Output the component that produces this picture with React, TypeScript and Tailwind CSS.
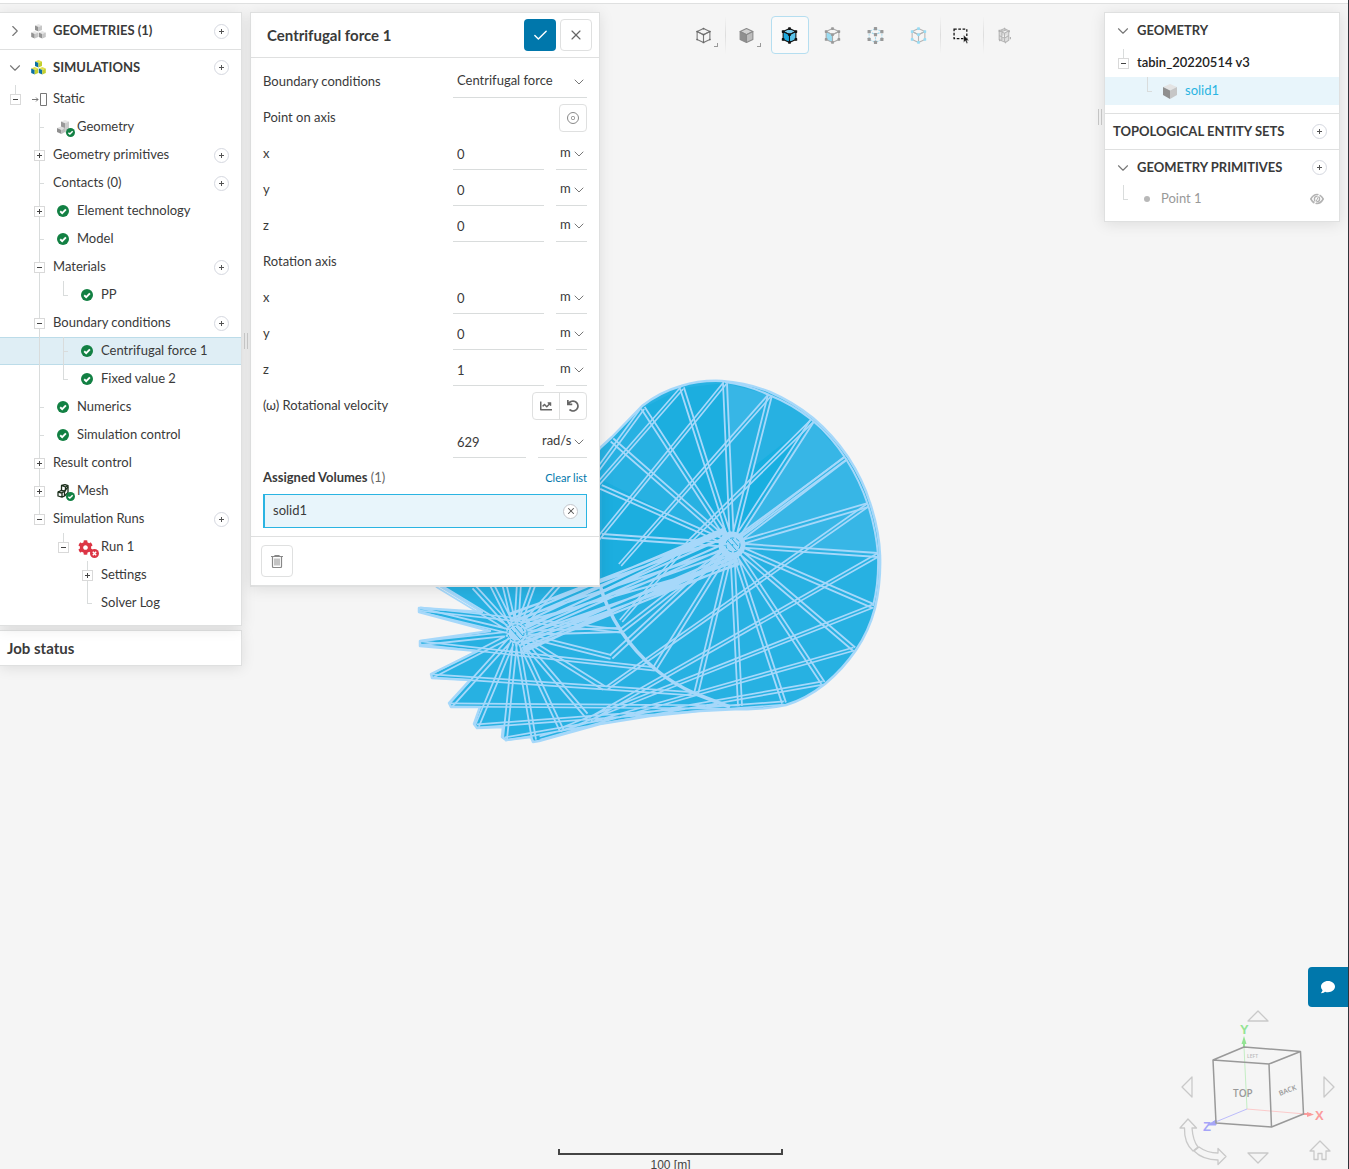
import type { ReactNode } from 'react'
import { Check, ChevronDown, ChevronRight, X } from 'lucide-react'
import { FaChartLine, FaCog, FaComment, FaUndo } from 'react-icons/fa'

type Guide = 'none' | 'line' | 'tick' | 'end' | 'plus' | 'minus' | 'minusEnd'

type TreeItem = {
  label: string
  guides: Guide[]
  icon?: ReactNode
  add?: boolean
  selected?: boolean
}

/* ---------- small icons ---------- */

const OkIcon = ({ className = 'size-3' }: { className?: string }) => (
  <svg viewBox="0 0 12 12" className={className}>
    <circle cx="6" cy="6" r="6" fill="#128043" />
    <path d="M3.2 6.2 5.2 8.1 8.9 4.3" fill="none" stroke="#fff" strokeWidth="1.9" />
  </svg>
)

const cubeAt = (x: number, y: number, c: string[]) => (
  <g key={`${x}-${y}`} transform={`translate(${x} ${y})`}>
    <path d="M0 1.5 3.5 0 7 1.5 3.5 3z" fill={c[0]} />
    <path d="M0 1.5 3.5 3V7.6L0 6z" fill={c[1]} />
    <path d="M7 1.5 3.5 3V7.6L7 6z" fill={c[2]} />
  </g>
)

const GRAY = ['#e6e6e6', '#929292', '#c6c6c6']
const LIME = ['#e3e04a', '#0b6fa4', '#c3cf2e']

const CubeStack = ({ colors }: { colors: string[] }) => (
  <svg viewBox="0 0 15 15" className="size-[15px]">
    {cubeAt(4, 0, colors)}
    {cubeAt(0.2, 7, colors)}
    {cubeAt(7.8, 7, colors)}
  </svg>
)

const StaticIcon = () => (
  <svg viewBox="0 0 17 13" className="h-[13px] w-[17px]" fill="none" stroke="#777">
    <path d="M1 6.5h6M5 4.5l2 2-2 2" />
    <path d="M9.5.5h6v12h-6z" />
  </svg>
)

const GeometryIcon = () => (
  <span className="relative flex">
    <svg viewBox="0 0 13 14" className="h-[14px] w-[13px]">
      <path d="M4 1.5 8 0l4 1.5L8 3.2z" fill="#e8e8e8" />
      <path d="M4 1.5 8 3.2V9L4 7.4z" fill="#999" />
      <path d="M12 1.5v8L8 13V3.2z" fill="#cbcbcb" />
      <path d="M0 8l4-1.5L8 8 4.5 10z" fill="#dedede" />
      <path d="M0 8l4.5 2v4L0 12z" fill="#8f8f8f" />
      <path d="M4.5 10 8 8v4l-3.500 2z" fill="#bdbdbd" />
    </svg>
    <OkIcon className="absolute top-2 left-[9px] size-[9px]" />
  </span>
)

const MeshIcon = () => (
  <span className="relative flex">
    <svg viewBox="0 0 13 14" className="h-[14px] w-[13px]" fill="none" stroke="#1c2f1c" strokeLinejoin="round">
      <path d="M4.500 1.500 8 .600l3 .900L8.500 3zM4.500 1.500V6M8.500 3v4.500M11 1.500V8.500L7.500 12" strokeWidth="1.300" />
      <path d="M1 8l3-1.500L7.500 7 5 9zM1 8v4l4 1.200V9M5 13.200 7.500 12V7L11 3" strokeWidth="1.300" />
    </svg>
    <OkIcon className="absolute top-2 left-[9px] size-[9px]" />
  </span>
)

const RunIcon = () => (
  <span className="relative flex">
    <FaCog className="size-[15px] text-[#dc3545]" />
    <svg viewBox="0 0 9 9" className="absolute top-[9px] left-3 size-[9px]">
      <circle cx="4.5" cy="4.5" r="4.5" fill="#dc3545" />
      <path d="M2.8 2.8l3.4 3.4M6.2 2.8 2.8 6.2" stroke="#fff" strokeWidth="1.4" />
    </svg>
  </span>
)

const SolidIcon = () => (
  <svg viewBox="0 0 16 16" className="size-4">
    <path d="M1 4 8 1l7 3-7 3.500z" fill="#e4e4e4" />
    <path d="M1 4l7 3.500V16l-7-4z" fill="#8f8f8f" />
    <path d="M15 4 8 7.500V16l7-4z" fill="#c6c6c6" />
  </svg>
)

const EyeOffIcon = () => (
  <svg viewBox="0 0 14 12" className="h-3 w-[14px]" fill="none" stroke="#b3b3b3">
    <path d="M.8 6C2.5 3 4.5 1.500 7 1.500S11.500 3 13.200 6C11.500 9 9.500 10.500 7 10.500S2.500 9 .8 6z" strokeWidth="1.6" />
    <circle cx="7" cy="6" r="2.6" strokeWidth="1.4" />
    <path d="M9.5 1 4.5 11" stroke="#fff" strokeWidth="1.2" />
    <path d="M8.5 3.500 6 8.500" />
  </svg>
)

const TrashIcon = () => (
  <svg viewBox="0 0 14 14" className="size-[14px]" fill="none" stroke="#888">
    <path d="M1 2.500h12M5 2.500v-1h4v1M2.500 2.500v10q0 1 1 1h7q1 0 1-1v-10" strokeWidth="1.2" />
    <path d="M5 4.500v7M7 4.500v7M9 4.500v7" />
  </svg>
)

/* ---------- tree ---------- */

const Expander = ({ open }: { open: boolean }) => (
  <button
    aria-label={open ? 'Collapse' : 'Expand'}
    className="absolute top-[9px] left-1.5 flex size-[11px] items-center justify-center border border-[#d9d9d9] bg-white"
  >
    <svg viewBox="0 0 5 5" className="size-[5px]" stroke="#444">
      <path d={open ? 'M0 2.5h5' : 'M0 2.5h5M2.5 0v5'} />
    </svg>
  </button>
)

const GuideCell = ({ kind }: { kind: Guide }) => {
  const toggle = kind === 'plus' || kind === 'minus' || kind === 'minusEnd'
  const through = kind === 'line' || kind === 'tick' || kind === 'plus' || kind === 'minus'
  return (
    <span className="relative grid w-6 shrink-0 grid-cols-[11px_5px] grid-rows-[15px_13px]">
      {kind !== 'none' && (
        <span className={`col-start-2 row-start-1 border-l border-[#d9dcdc] ${kind === 'tick' || kind === 'end' ? 'border-b' : ''}`} />
      )}
      {through && <span className="col-start-2 row-start-2 border-l border-[#d9dcdc]" />}
      {toggle && <Expander open={kind !== 'plus'} />}
    </span>
  )
}

const AddButton = ({ label }: { label: string }) => (
  <button aria-label={label} className="ml-auto flex size-[15px] shrink-0 items-center justify-center rounded-full border border-[#d5d8e0] bg-white">
    <svg viewBox="0 0 5 5" className="size-[5px]" stroke="#555">
      <path d="M0 2.5h5M2.5 0v5" />
    </svg>
  </button>
)

const TreeRow = ({ item }: { item: TreeItem }) => (
  <li className={`flex h-7 pr-3 pl-1 ${item.selected ? 'bg-[#dfeef5] shadow-[inset_0_1px_#bcdce9,inset_0_-1px_#bcdce9]' : ''}`}>
    {item.guides.map((g, i) => (
      <GuideCell key={i} kind={g} />
    ))}
    {item.icon && <span className="flex w-6 shrink-0 items-center pl-[5px]">{item.icon}</span>}
    <span className="pl-px text-[13px] leading-[26px] whitespace-nowrap">{item.label}</span>
    {item.add && (
      <span className="ml-auto flex items-center">
        <AddButton label={`Add to ${item.label}`} />
      </span>
    )}
  </li>
)

const tree: TreeItem[] = [
  { label: 'Geometry', guides: ['none', 'tick'], icon: <GeometryIcon /> },
  { label: 'Geometry primitives', guides: ['none', 'plus'], add: true },
  { label: 'Contacts (0)', guides: ['none', 'tick'], add: true },
  { label: 'Element technology', guides: ['none', 'plus'], icon: <OkIcon /> },
  { label: 'Model', guides: ['none', 'tick'], icon: <OkIcon /> },
  { label: 'Materials', guides: ['none', 'minus'], add: true },
  { label: 'PP', guides: ['none', 'line', 'end'], icon: <OkIcon /> },
  { label: 'Boundary conditions', guides: ['none', 'minus'], add: true },
  { label: 'Centrifugal force 1', guides: ['none', 'line', 'tick'], icon: <OkIcon />, selected: true },
  { label: 'Fixed value 2', guides: ['none', 'line', 'end'], icon: <OkIcon /> },
  { label: 'Numerics', guides: ['none', 'tick'], icon: <OkIcon /> },
  { label: 'Simulation control', guides: ['none', 'tick'], icon: <OkIcon /> },
  { label: 'Result control', guides: ['none', 'plus'] },
  { label: 'Mesh', guides: ['none', 'plus'], icon: <MeshIcon /> },
  { label: 'Simulation Runs', guides: ['none', 'minusEnd'], add: true },
]

const Grip = ({ className }: { className: string }) => (
  <span className={`absolute h-4 w-1 border-x border-[#c4c4c4] ${className}`} />
)

const SimulationTree = () => (
  <aside className="w-[242px] shrink-0">
    <div className="relative border border-l-0 border-[#dfe0e0] bg-white pb-2 shadow-[0_2px_14px_rgba(0,0,0,0.1)]">
      <div className="flex h-[37px] items-center border-b border-[#dfe0e0] pr-3 pl-1">
        <button aria-label="Expand geometries" className="flex w-6 pl-0.5">
          <ChevronRight size={18} strokeWidth={1.5} color="#777" />
        </button>
        <span className="flex w-6 pl-[3px]"><CubeStack colors={GRAY} /></span>
        <h2 className="pb-0.5 pl-px text-[13px] leading-5 font-bold">GEOMETRIES (1)</h2>
        <AddButton label="Add geometry" />
      </div>
      <div className="flex h-[35px] items-center pr-3 pl-1">
        <button aria-label="Collapse simulations" className="flex w-6 pl-0.5">
          <ChevronDown size={18} strokeWidth={1.5} color="#777" />
        </button>
        <span className="flex w-6 pl-[3px]"><CubeStack colors={LIME} /></span>
        <h2 className="pb-0.5 pl-px text-[13px] leading-5 font-bold">SIMULATIONS</h2>
        <AddButton label="Add simulation" />
      </div>
      <ul>
        <li className="flex h-7 pr-3 pl-1">
          <GuideCell kind="minusEnd" />
          <span className="flex w-6 items-center pl-[3px]"><StaticIcon /></span>
          <span className="pl-px text-[13px] leading-[26px]">Static</span>
        </li>
        {tree.map((item) => (
          <TreeRow key={item.label} item={item} />
        ))}
        <li className="flex h-7 pr-3 pl-1">
          <GuideCell kind="none" />
          <GuideCell kind="none" />
          <GuideCell kind="minusEnd" />
          <span className="flex w-6 items-center pl-0.5"><RunIcon /></span>
          <span className="pl-px text-[13px] leading-[26px]">Run 1</span>
        </li>
        <TreeRow item={{ label: 'Settings', guides: ['none', 'none', 'none', 'plus'] }} />
        <TreeRow item={{ label: 'Solver Log', guides: ['none', 'none', 'none', 'end'] }} />
      </ul>
      <Grip className="top-80 -right-[7px]" />
    </div>
    <div className="mt-1 border border-l-0 border-[#dfe0e0] bg-white px-[7px] py-[7px] shadow-[0_2px_14px_rgba(0,0,0,0.1)]">
      <h2 className="text-[15px] leading-5 font-bold">Job status</h2>
    </div>
  </aside>
)

/* ---------- boundary condition form ---------- */

type SelectProps = { id?: string; label: string; value: string; className: string }

const Select = ({ id, label, value, className }: SelectProps) => (
  <span className={`relative flex h-[34px] border-b border-[#d9dcdc] ${className}`}>
    <select id={id} aria-label={label} className="w-full appearance-none bg-transparent pl-1 text-[13px] outline-none">
      <option>{value}</option>
    </select>
    <ChevronDown size={16} strokeWidth={1.5} color="#777" className="pointer-events-none absolute top-[10px] right-0" />
  </span>
)

const AxisRow = ({ group, axis, value }: { group: string; axis: string; value: string }) => (
  <div className="flex h-9 items-start">
    <label htmlFor={`${group}-${axis}`} className="w-[190px] text-[13px] leading-[34px]">{axis}</label>
    <input
      id={`${group}-${axis}`}
      defaultValue={value}
      className="mr-3 h-[34px] w-0 flex-1 border-b border-[#d9dcdc] pt-0.5 pl-1 text-[13px] outline-none"
    />
    <Select label={`${group} ${axis} unit`} value="m" className="w-[31px]" />
  </div>
)

const ForceForm = () => (
  <section className="w-[350px] shrink-0 self-start border border-b-2 border-[#dfe0e0] bg-white shadow-[0_2px_14px_rgba(0,0,0,0.1)]">
    <header className="flex h-[45px] items-center gap-1 border-b border-[#dfe0e0] pr-[7px] pl-4">
      <h1 className="mr-auto text-[15px] leading-6 font-bold">Centrifugal force 1</h1>
      <button aria-label="Apply" className="flex size-8 items-center justify-center rounded bg-[#0077ab]">
        <Check size={17} strokeWidth={2} color="#fff" />
      </button>
      <button aria-label="Close" className="flex size-8 items-center justify-center rounded border border-[#dfe0e0]">
        <X size={16} strokeWidth={1.75} color="#666" />
      </button>
    </header>
    <form className="px-3 pt-1.5 pb-2">
      <div className="flex h-9 items-start">
        <label htmlFor="bc-type" className="w-[190px] text-[13px] leading-[34px]">Boundary conditions</label>
        <Select id="bc-type" label="Boundary conditions" value="Centrifugal force" className="flex-1" />
      </div>
      <div className="flex h-9 items-start justify-between">
        <span className="text-[13px] leading-[34px]">Point on axis</span>
        <button type="button" aria-label="Pick point" className="mt-1 flex size-7 items-center justify-center rounded border border-[#dfe0e0]">
          <svg viewBox="0 0 12 12" className="size-3" fill="none" stroke="#888">
            <circle cx="6" cy="6" r="5.5" />
            <rect x="4.5" y="4.5" width="3" height="3" rx="1" />
          </svg>
        </button>
      </div>
      <AxisRow group="point" axis="x" value="0" />
      <AxisRow group="point" axis="y" value="0" />
      <AxisRow group="point" axis="z" value="0" />
      <p className="h-9 text-[13px] leading-[34px]">Rotation axis</p>
      <AxisRow group="rotation" axis="x" value="0" />
      <AxisRow group="rotation" axis="y" value="0" />
      <AxisRow group="rotation" axis="z" value="1" />
      <div className="flex h-9 items-start">
        <label htmlFor="velocity" className="mr-auto text-[13px] leading-[34px]">(ω) Rotational velocity</label>
        <div className="mt-1 flex h-7 rounded border border-[#dfe0e0]">
          <button type="button" aria-label="Table input" className="flex w-[27px] items-center justify-center border-r border-[#dfe0e0]">
            <FaChartLine className="size-3 text-[#666]" />
          </button>
          <button type="button" aria-label="Reset" className="flex w-[26px] items-center justify-center">
            <FaUndo className="size-3 text-[#666]" />
          </button>
        </div>
      </div>
      <div className="flex h-9 items-start pl-[190px]">
        <input id="velocity" defaultValue="629" className="mr-3 h-[34px] w-0 flex-1 border-b border-[#d9dcdc] pt-0.5 pl-1 text-[13px] outline-none" />
        <Select label="Velocity unit" value="rad/s" className="w-[49px]" />
      </div>
      <div className="flex h-[34px] items-center justify-between">
        <h3 className="text-[13px] leading-5 font-bold">
          Assigned Volumes <span className="font-normal text-[#666]">(1)</span>
        </h3>
        <button type="button" className="pt-px text-[11px] leading-5 text-[#0077ab]">Clear list</button>
      </div>
      <div className="flex h-[34px] items-center justify-between border border-l-2 border-[#2ab4e2] bg-[#e8f5fb] px-2">
        <span className="pb-0.5 text-[13px] leading-5">solid1</span>
        <button type="button" aria-label="Remove solid1" className="flex size-[15px] items-center justify-center rounded-full border border-[#c3c6cc] bg-white">
          <X size={10} strokeWidth={2.5} color="#555" />
        </button>
      </div>
    </form>
    <footer className="border-t border-[#dfe0e0] px-2.5 py-2">
      <button aria-label="Delete" className="flex size-8 items-center justify-center rounded border border-[#dfe0e0]">
        <TrashIcon />
      </button>
    </footer>
  </section>
)

/* ---------- viewer toolbar ---------- */

type CubeProps = {
  line: string
  dots?: string
  dotSize?: number
  top?: string
  left?: string
  right?: string
  dashed?: boolean
}

const corners = [[8, 1.5], [14, 4.3], [14, 11.7], [8, 14.5], [2, 11.7], [2, 4.3], [8, 7.2]]

const Cube = ({ line, dots, dotSize = 2, top = 'none', left = 'none', right = 'none', dashed }: CubeProps) => (
  <svg viewBox="0 0 16 16" className="size-[17px]">
    <g stroke={line} strokeWidth="1" strokeLinejoin="round" strokeDasharray={dashed ? '2 1' : undefined}>
      <path d="M8 1.5l6 2.8-6 2.9-6-2.9z" fill={top} />
      <path d="M2 4.3l6 2.9v7.3l-6-2.8z" fill={left} />
      <path d="M14 4.3 8 7.2v7.3l6-2.8z" fill={right} />
    </g>
    {dots &&
      corners.map(([x, y]) => (
        <rect key={`${x}-${y}`} x={x - dotSize / 2} y={y - dotSize / 2} width={dotSize} height={dotSize} rx="0.5" fill={dots} />
      ))}
  </svg>
)

const Tool = ({ label, active, more, children }: { label: string; active?: boolean; more?: boolean; children: ReactNode }) => (
  <button
    aria-label={label}
    className={`relative flex size-[38px] items-center justify-center rounded border pt-px ${active ? 'border-[#b5def0] bg-[#fafafa]' : 'border-transparent'}`}
  >
    {children}
    {more && <span className="absolute right-1 bottom-1.5 size-1 border-r border-b border-[#999]" />}
  </button>
)

const Separator = ({ hidden }: { hidden?: boolean }) => (
  <span className={`mx-0.5 w-px ${hidden ? '' : 'bg-linear-to-b from-transparent via-[#dddddd] to-transparent'}`} />
)

const Toolbar = () => (
  <nav className="flex flex-1 justify-center self-start pt-1 pl-1">
    <Tool label="View" more><Cube line="#777" dots="#666" dotSize={1.5} /></Tool>
    <Separator />
    <Tool label="Render mode" more><Cube line="#8a8a8a" top="#d2d2d2" left="#8f8f8f" right="#bdbdbd" /></Tool>
    <Separator hidden />
    <Tool label="Pick volumes" active>
      <Cube line="#111" dots="#111" dotSize={2.5} top="#7ccdee" left="#1fa9dd" right="#59c3ea" />
    </Tool>
    <Separator hidden />
    <Tool label="Pick faces"><Cube line="#aaa" dots="#999" dotSize={2.5} left="#9adcf2" /></Tool>
    <Separator hidden />
    <Tool label="Pick nodes"><Cube line="#a9dcef" dots="#999" dotSize={3} dashed /></Tool>
    <Separator hidden />
    <Tool label="Pick edges"><Cube line="#b5b5b5" dots="#97dcf5" dotSize={2.5} /></Tool>
    <Separator />
    <Tool label="Box select">
      <svg viewBox="0 0 16 16" className="size-[17px]">
        <path d="M1 2h12v9H1z" fill="none" stroke="#111" strokeWidth="1.2" strokeDasharray="2.5 1.5" />
        <path d="M10 7.500v7l1.700-1.500 1.100 2.600 1.200-.5-1.100-2.500h2.100z" fill="#111" stroke="#f5f5f5" strokeWidth="0.4" />
      </svg>
    </Tool>
    <Separator />
    <Tool label="Mesh clip">
      <svg viewBox="0 0 16 16" className="size-[17px]" fill="#dedede" stroke="#b5b5b5">
        <path d="M3 3.500 8 1.500l4 2v9l-3 2-6-2.500zM3 3.500l5 2.300 4-2.300M8 5.800v8.500M5.500 2.500v11M3 8l5 2.500L12 8M5 4.500l5-2" />
        <path d="M2.500 3.500h1M8 1.500h.5M3 12.500h1M8.500 14.500h.5M13 10.500h1M12 4h1" stroke="#aaa" strokeWidth="2" />
      </svg>
    </Tool>
  </nav>
)

/* ---------- geometry panel ---------- */

const GeometryPanel = () => (
  <aside className="relative mr-2 w-[236px] shrink-0 self-start border border-[#dfe0e0] bg-white pb-2 shadow-[0_2px_14px_rgba(0,0,0,0.1)]">
    <Grip className="top-24 -left-[7px]" />
    <div className="flex h-9 items-center pl-[7px]">
      <button aria-label="Collapse geometry" className="flex w-6 pl-0.5">
        <ChevronDown size={18} strokeWidth={1.5} color="#777" />
      </button>
      <h2 className="pb-0.5 pl-px text-[13px] leading-5 font-bold">GEOMETRY</h2>
    </div>
    <ul className="border-b border-[#dfe0e0] pb-2">
      <li className="flex h-7 pl-[7px]">
        <GuideCell kind="minusEnd" />
        <span className="pl-px text-[13px] leading-[26px] font-semibold text-[#222]">tabin_20220514 v3</span>
      </li>
      <li className="flex h-7 bg-[#e8f5fb] pl-[7px]">
        <GuideCell kind="none" />
        <GuideCell kind="end" />
        <span className="flex w-6 items-center pl-0.5"><SolidIcon /></span>
        <span className="pl-px text-[13px] leading-[26px] text-[#2ab4e2]">solid1</span>
      </li>
    </ul>
    <div className="flex h-9 items-center border-b border-[#dfe0e0] pr-3 pl-2">
      <h2 className="pb-0.5 text-[13px] leading-5 font-bold whitespace-nowrap">TOPOLOGICAL ENTITY SETS</h2>
      <AddButton label="Add topological entity set" />
    </div>
    <div className="flex h-[35px] items-center pr-3 pl-[7px]">
      <button aria-label="Collapse geometry primitives" className="flex w-6 pl-0.5">
        <ChevronDown size={18} strokeWidth={1.5} color="#777" />
      </button>
      <h2 className="pb-0.5 pl-px text-[13px] leading-5 font-bold whitespace-nowrap">GEOMETRY PRIMITIVES</h2>
      <AddButton label="Add geometry primitive" />
    </div>
    <div className="flex h-7 pr-[15px] pl-[7px]">
      <GuideCell kind="end" />
      <span className="flex w-6 items-center pl-2"><span className="size-1.5 rounded-full bg-[#b8b8b8]" /></span>
      <span className="pl-px text-[13px] leading-[26px] text-[#999]">Point 1</span>
      <button aria-label="Show Point 1" className="ml-auto"><EyeOffIcon /></button>
    </div>
  </aside>
)

/* ---------- 3D model ---------- */

type Seg = [number, number, number, number]

const HUB_A = [732, 545]
const HUB_B = [516, 633]

const rimA = [
  [602, 536], [601, 487], [612, 440], [643, 408], [682, 388], [725, 383], [770, 395], [812, 421], [846, 458], [868, 505],
  [878, 555], [873, 606], [854, 649], [823, 683], [784, 703], [740, 706], [696, 694], [655, 668], [621, 631], [611, 657],
]

const rimB = [
  [437, 585], [474, 587], [491, 583], [504, 583], [519, 583], [534, 583], [560, 583], [420, 610], [421, 643], [432, 676],
  [451, 705], [477, 726], [505, 739], [534, 740], [562, 731], [586, 715], [604, 688], [611, 657], [620, 630],
]

// edges that run along the blades between the two wheels
const blades: Seg[] = [
  [812, 421, 690, 541], [770, 395, 620, 565], [725, 383, 598, 539], [682, 388, 598, 484], [643, 408, 596, 472],
  [868, 505, 607, 688], [878, 555, 590, 719], [873, 606, 560, 730], [854, 649, 540, 738], [823, 683, 505, 739],
  [784, 703, 477, 726], [740, 707, 451, 705], [696, 694, 432, 676], [655, 669, 421, 643], [621, 631, 420, 609],
  [846, 458, 740, 536], [621, 621, 690, 541],
]

const pair = ([x1, y1, x2, y2]: Seg, gap = 2) => {
  const len = Math.hypot(x2 - x1, y2 - y1)
  const nx = (-(y2 - y1) / len) * gap
  const ny = ((x2 - x1) / len) * gap
  return `M${x1 + nx} ${y1 + ny}L${x2 + nx} ${y2 + ny}M${x1 - nx} ${y1 - ny}L${x2 - nx} ${y2 - ny}`
}

const spokes = [
  ...rimA.map(([x, y]) => pair([HUB_A[0], HUB_A[1], x, y])),
  ...rimB.map(([x, y]) => pair([HUB_B[0], HUB_B[1], x, y])),
].join('')

const bladeLines = blades.map((b) => pair(b, 1.6)).join('')

// start and end offset of every line along the shaft
const shaft = [
  [-18, -14], [-14, -17], [-19, -8], [-10, -13], [-6, -16], [-12, 2], [-2, -9], [2, -4], [-4, 6],
  [5, 0], [8, 12], [4, 16], [12, 8], [15, 14], [17, 18], [19, 10], [10, 19], [-8, 16], [0, -14],
]
  .map(([a, b]) => `M${516 + a * 0.4} ${633 + a}L${732 + b * 0.4} ${545 + b}`)
  .join('')

const OUTLINE =
  'M600 448 612 437 642 406Q660 392 681 386 700 380 722 381 748 383 770 392 793 402 813 418 833 435 848 457 863 480 870 503 879 530 880 555 881 582 875 608 869 631 856 650 843 669 825 684 806 699 786 705 762 710 740 709L700 711 650 716 600 724 539 741 533 742 531 737 506 740 502 737 503 727 477 728 474 724 480 707 451 707 449 703 470 680 432 678 431 674 478 651 420 646 420 641 490 631 419 612 419 608 482 612 430 580 560 520z'

const Model = () => (
  <svg viewBox="410 370 480 380" className="absolute top-[366px] left-[410px] h-[380px] w-[480px]" aria-label="Turbine model">
    <path d={OUTLINE} fill="#27b1e2" />
    <path d="M732 545 643 408 682 388 725 383 729 440zM732 545 602 590V480z" fill="#1caedf" />
    <path d="M725 383 770 395 729 440zM812 421 846 458 868 505 740 540 775 478zM732 545 868 505 878 555z" fill="#37b6e6" />
    <path d="M748 471 812 421 732 545z" fill="#18afe0" />
    <g fill="none" stroke="#a6d8fa" strokeLinejoin="round">
      <path d={OUTLINE} strokeWidth="2.5" />
      <path d="M725 382Q748 385 769 395 792 404 812 420 832 437 846 459 860 481 868 505 876 530 878 555 879 582 873 606" strokeWidth="2" />
      <path d={spokes} strokeWidth="1.8" />
      <path d={bladeLines} strokeWidth="1.7" />
      <path d={shaft} strokeWidth="2.3" />
      <path d="M600 585Q606 608 621 631 635 652 655 669 673 684 696 694L730 707" strokeWidth="3.5" />
      <circle cx="732" cy="545" r="11" strokeWidth="5" />
    </g>
    {/* shaft bores */}
    <g fill="none" stroke="#27b1e2">
      <circle cx="733" cy="545" r="7" strokeDasharray="4 2" />
      <circle cx="516" cy="633" r="8" strokeDasharray="3 2" />
      <circle cx="516" cy="633" r="11" strokeDasharray="2 4" />
      <path d="M511 629l9 10M515 627l8 9M728 541l8 9M732 539l6 7" />
    </g>
  </svg>
)

/* ---------- orientation cube ---------- */

const ViewCube = () => (
  <svg viewBox="1175 1005 170 164" className="absolute right-[3px] bottom-0 h-[164px] w-[170px]" fill="none" aria-label="View orientation">
    <g stroke="#c9c9c9" strokeWidth="1.3" strokeLinejoin="round">
      <path d="M1258 1011l10 10h-20zM1258 1163l10-10h-20zM1182 1087l10-10v20zM1334 1087l-10-10v20z" />
      <path d="M1188 1119l8.500 9h-4.500q1 13 6 19l-5 4q-9-8-8.500-23h-4.500z" />
      <path d="M1199 1147q8 6 19 6v-4.500l8 8-8 8v-4.500q-15 0-24-9z" />
      <path d="M1320 1141l10 10h-4v8.500h-4v-6h-4v6h-4V1151h-4z" />
    </g>
    <path d="M1244 1047l3 62" stroke="#c4eec4" />
    <path d="M1247 1109l58 5" stroke="#fbcaca" />
    <path d="M1247 1109l-34 14" stroke="#bcbcfb" />
    <path d="M1244 1047v-8" stroke="#93e493" strokeWidth="2" />
    <path d="M1244 1036l2.500 8h-5z" fill="#93e493" />
    <path d="M1303 1114h8" stroke="#fb9c9c" strokeWidth="2" />
    <path d="M1314 1114.500l-7-2.500v5z" fill="#fb9c9c" />
    <path d="M1208 1125l8-5v5z" fill="#a5a5f8" stroke="#a5a5f8" />
    <path d="M1213 1060l56 4 2.500 63-55.500-4zM1213 1060l31-13 56.500 4.500 3 62.500-32 13M1269 1064l31.500-12.500" stroke="#999" strokeWidth="1.5" strokeLinejoin="round" />
    <g className="font-['Liberation_Sans'] font-bold" fontSize="13">
      <text x="1240" y="1034" fill="#93e493">Y</text>
      <text x="1315" y="1120" fill="#fb9c9c">X</text>
      <text x="1203" y="1131" fill="#a5a5f8">Z</text>
    </g>
    <g className="font-['Open_Sans'] font-semibold" fill="#999">
      <text x="1233" y="1097" fontSize="10">TOP</text>
      <text x="1280" y="1096" fontSize="7" transform="rotate(-22 1280 1096)">BACK</text>
      <text x="1247" y="1058" fontSize="5" fill="#bbb">LEFT</text>
    </g>
  </svg>
)

const ScaleBar = () => (
  <div className="absolute inset-x-0 -bottom-1 flex justify-center pr-[7px]">
    <div className="w-[225px]">
      <div className="h-1.5 border-2 border-t-0 border-[#444]" />
      <p className="pt-0.5 text-center font-['Liberation_Sans',sans-serif] text-xs leading-4 text-[#444]">100 [m]</p>
    </div>
  </div>
)

export default function App() {
  return (
    <div className="flex min-h-screen flex-col border-r border-[#30343a] bg-white font-['Lato',sans-serif] text-[#3a3a3a]">
      <main className="relative mt-[3px] flex flex-1 overflow-hidden border-t border-[#dfe0e0] bg-[#f5f5f5] pt-2">
        <Model />
        <ScaleBar />
        <ViewCube />
        <div className="relative flex w-full gap-2">
          <SimulationTree />
          <div className="flex flex-1">
            <ForceForm />
            <Toolbar />
            <GeometryPanel />
          </div>
        </div>
        <button aria-label="Chat" className="absolute right-0 bottom-[162px] flex size-10 items-center justify-center rounded-l bg-[#0077ab]">
          <FaComment className="size-[14px] text-white" />
        </button>
      </main>
    </div>
  )
}
